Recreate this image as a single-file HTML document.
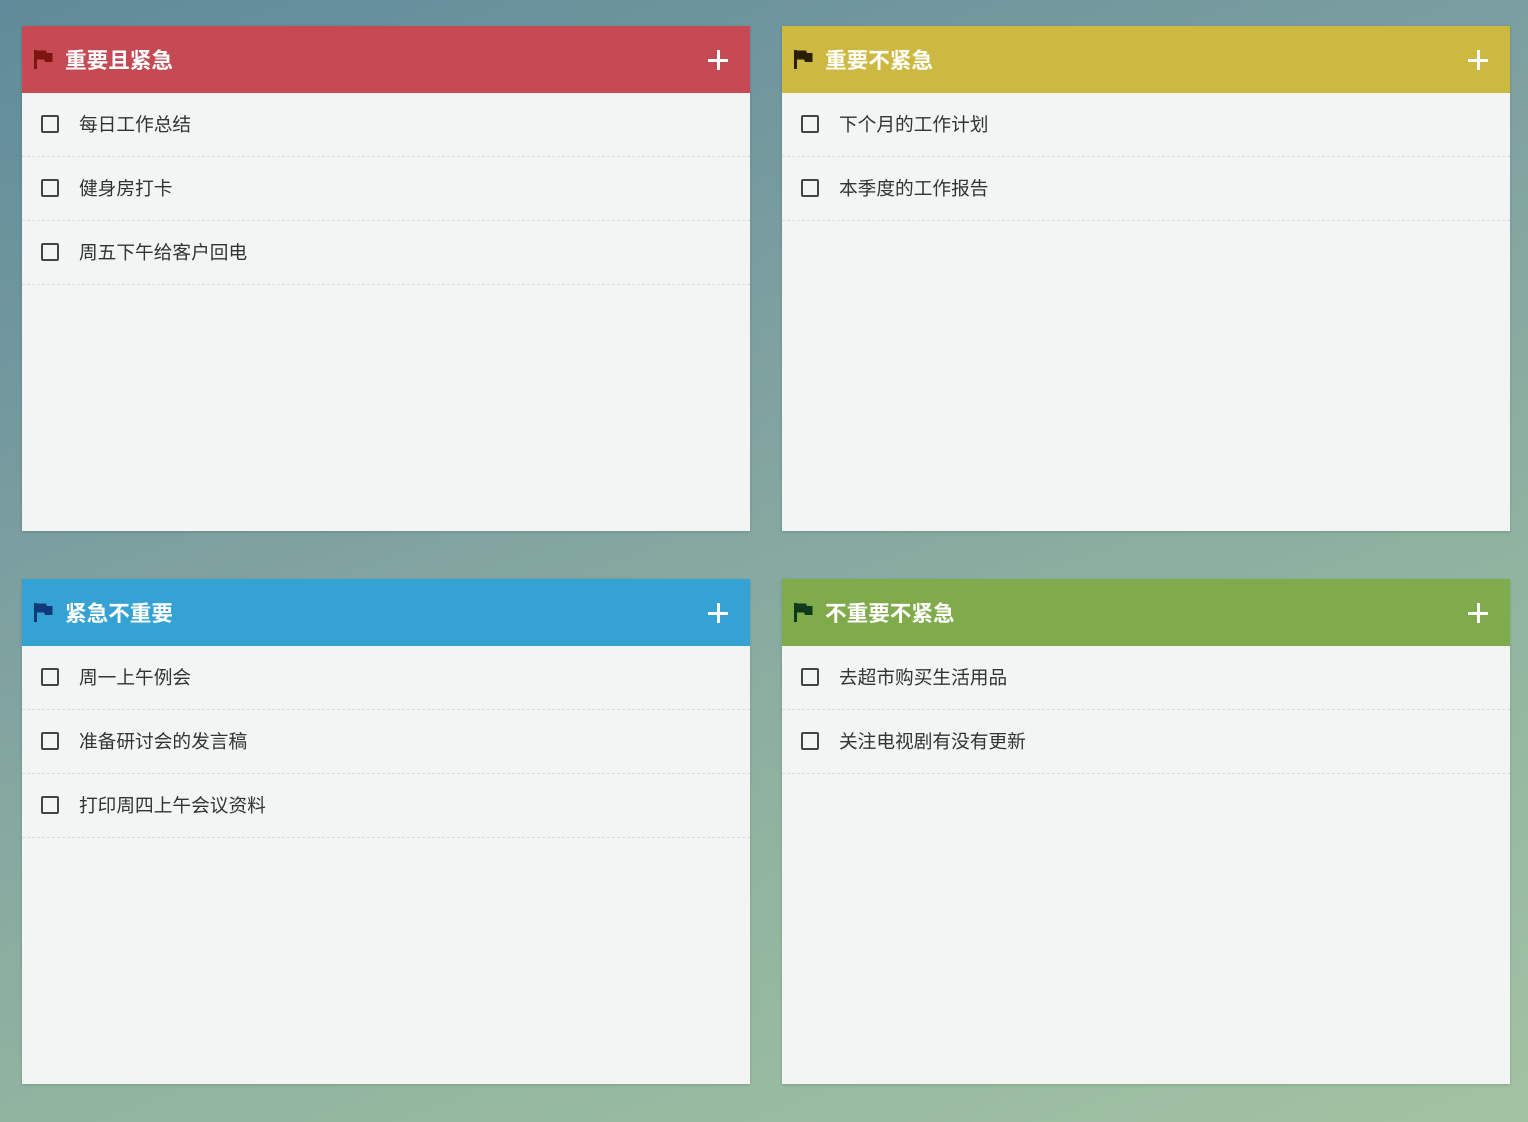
<!DOCTYPE html>
<html><head><meta charset="utf-8"><style>
*{margin:0;padding:0;box-sizing:border-box}
body{width:1528px;height:1122px;overflow:hidden;font-family:"Liberation Sans","Noto Sans CJK SC",sans-serif;
background:linear-gradient(160deg,#5f8b9a 0%,#7c9fa0 35%,#8fb3a0 65%,#a2c2a2 100%);position:relative}
.p{position:absolute;width:728px;height:505px;background:#f3f5f5;box-shadow:0 1px 3px rgba(0,0,0,.15)}
.h{height:67px;display:flex;align-items:center;padding-left:11px;color:#fff;font-size:21.6px;font-weight:bold;position:relative}
.h svg{margin-right:12px;margin-top:-2px}
.plus{position:absolute;right:22px;top:24px;width:20px;height:20px}
.plus:before,.plus:after{content:"";position:absolute;background:#fff}
.plus:before{left:9px;top:0;width:2.5px;height:20px}
.plus:after{top:9px;left:0;height:2.5px;width:20px}
.r{height:64px;border-bottom:1px dashed #d8dee0;display:flex;align-items:center;padding-left:19px;font-size:18.7px;color:#333;padding-bottom:2px}
.cb{width:18px;height:18px;border:2px solid #444;border-radius:2px;margin-right:20px}
</style></head><body>
<div class="p" style="left:22px;top:26px">
<div class="h" style="background:#c54a53"><svg width="20" height="20" viewBox="0 0 20 20"><path d="M1 1h3v19H1z M4 1.5h9l1 2.5h5.5v9H12l-1-2.5H4z" fill="#7d1610"/></svg>重要且紧急<div class="plus"></div></div>
<div class="r"><div class="cb"></div>每日工作总结</div>
<div class="r"><div class="cb"></div>健身房打卡</div>
<div class="r"><div class="cb"></div>周五下午给客户回电</div>
</div>
<div class="p" style="left:782px;top:26px">
<div class="h" style="background:#cdb942"><svg width="20" height="20" viewBox="0 0 20 20"><path d="M1 1h3v19H1z M4 1.5h9l1 2.5h5.5v9H12l-1-2.5H4z" fill="#2a2000"/></svg>重要不紧急<div class="plus"></div></div>
<div class="r"><div class="cb"></div>下个月的工作计划</div>
<div class="r"><div class="cb"></div>本季度的工作报告</div>
</div>
<div class="p" style="left:22px;top:579px">
<div class="h" style="background:#34a2d2"><svg width="20" height="20" viewBox="0 0 20 20"><path d="M1 1h3v19H1z M4 1.5h9l1 2.5h5.5v9H12l-1-2.5H4z" fill="#0e3a7a"/></svg>紧急不重要<div class="plus"></div></div>
<div class="r"><div class="cb"></div>周一上午例会</div>
<div class="r"><div class="cb"></div>准备研讨会的发言稿</div>
<div class="r"><div class="cb"></div>打印周四上午会议资料</div>
</div>
<div class="p" style="left:782px;top:579px">
<div class="h" style="background:#7fab4a"><svg width="20" height="20" viewBox="0 0 20 20"><path d="M1 1h3v19H1z M4 1.5h9l1 2.5h5.5v9H12l-1-2.5H4z" fill="#0d3a1a"/></svg>不重要不紧急<div class="plus"></div></div>
<div class="r"><div class="cb"></div>去超市购买生活用品</div>
<div class="r"><div class="cb"></div>关注电视剧有没有更新</div>
</div>
</body></html>
